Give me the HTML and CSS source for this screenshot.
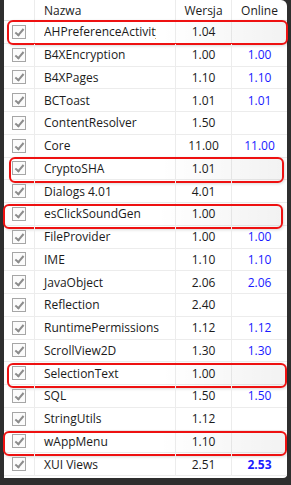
FILE: index.html
```html
<!DOCTYPE html>
<html lang="pl">
<head>
    <meta charset="UTF-8">
    <title>Biblioteki</title>
    <link rel="stylesheet" href="styles.css">
</head>
<body>
    <div class="panel">
        <div class="row head">
            <div class="cell chk"></div>
            <div class="cell name">Nazwa</div>
            <div class="cell ver">Wersja</div>
            <div class="cell online">Online</div>
        </div>

        <div class="row">
            <div class="cell chk"><span class="box"></span></div>
            <div class="cell name"><span class="label">AHPreferenceActivity</span></div>
            <div class="cell ver">1.04</div>
            <div class="cell online"></div>
            <div class="mark m1"></div>
        </div>
        <div class="row">
            <div class="cell chk"><span class="box"></span></div>
            <div class="cell name">B4XEncryption</div>
            <div class="cell ver">1.00</div>
            <div class="cell online">1.00</div>
        </div>
        <div class="row">
            <div class="cell chk"><span class="box"></span></div>
            <div class="cell name">B4XPages</div>
            <div class="cell ver">1.10</div>
            <div class="cell online">1.10</div>
        </div>
        <div class="row">
            <div class="cell chk"><span class="box"></span></div>
            <div class="cell name">BCToast</div>
            <div class="cell ver">1.01</div>
            <div class="cell online">1.01</div>
        </div>
        <div class="row">
            <div class="cell chk"><span class="box"></span></div>
            <div class="cell name">ContentResolver</div>
            <div class="cell ver">1.50</div>
            <div class="cell online"></div>
        </div>
        <div class="row">
            <div class="cell chk"><span class="box"></span></div>
            <div class="cell name">Core</div>
            <div class="cell ver">11.00</div>
            <div class="cell online">11.00</div>
        </div>
        <div class="row">
            <div class="cell chk"><span class="box"></span></div>
            <div class="cell name">CryptoSHA</div>
            <div class="cell ver">1.01</div>
            <div class="cell online"></div>
            <div class="mark m2"></div>
        </div>
        <div class="row">
            <div class="cell chk"><span class="box"></span></div>
            <div class="cell name">Dialogs 4.01</div>
            <div class="cell ver">4.01</div>
            <div class="cell online"></div>
        </div>
        <div class="row">
            <div class="cell chk"><span class="box"></span></div>
            <div class="cell name">esClickSoundGen</div>
            <div class="cell ver">1.00</div>
            <div class="cell online"></div>
            <div class="mark m3"></div>
        </div>
        <div class="row">
            <div class="cell chk"><span class="box"></span></div>
            <div class="cell name">FileProvider</div>
            <div class="cell ver">1.00</div>
            <div class="cell online">1.00</div>
        </div>
        <div class="row">
            <div class="cell chk"><span class="box"></span></div>
            <div class="cell name">IME</div>
            <div class="cell ver">1.10</div>
            <div class="cell online">1.10</div>
        </div>
        <div class="row">
            <div class="cell chk"><span class="box"></span></div>
            <div class="cell name">JavaObject</div>
            <div class="cell ver">2.06</div>
            <div class="cell online">2.06</div>
        </div>
        <div class="row">
            <div class="cell chk"><span class="box"></span></div>
            <div class="cell name">Reflection</div>
            <div class="cell ver">2.40</div>
            <div class="cell online"></div>
        </div>
        <div class="row">
            <div class="cell chk"><span class="box"></span></div>
            <div class="cell name">RuntimePermissions</div>
            <div class="cell ver">1.12</div>
            <div class="cell online">1.12</div>
        </div>
        <div class="row">
            <div class="cell chk"><span class="box"></span></div>
            <div class="cell name">ScrollView2D</div>
            <div class="cell ver">1.30</div>
            <div class="cell online">1.30</div>
        </div>
        <div class="row">
            <div class="cell chk"><span class="box"></span></div>
            <div class="cell name">SelectionText</div>
            <div class="cell ver">1.00</div>
            <div class="cell online"></div>
            <div class="mark m4"></div>
        </div>
        <div class="row">
            <div class="cell chk"><span class="box"></span></div>
            <div class="cell name">SQL</div>
            <div class="cell ver">1.50</div>
            <div class="cell online">1.50</div>
        </div>
        <div class="row">
            <div class="cell chk"><span class="box"></span></div>
            <div class="cell name">StringUtils</div>
            <div class="cell ver">1.12</div>
            <div class="cell online"></div>
        </div>
        <div class="row">
            <div class="cell chk"><span class="box"></span></div>
            <div class="cell name">wAppMenu</div>
            <div class="cell ver">1.10</div>
            <div class="cell online"></div>
            <div class="mark m5"></div>
        </div>
        <div class="row">
            <div class="cell chk"><span class="box"></span></div>
            <div class="cell name">XUI Views</div>
            <div class="cell ver">2.51</div>
            <div class="cell online newer">2.53</div>
        </div>
    </div>
</body>
</html>
```

FILE: styles.css
```css
:root {
    --line: #ececec;
    --text: #1b1b1b;
    --blue: #1a1aff;
    --mark: #ee1111;
}
body {
    margin: 0;
    background-color: #2e2e2e;
    font-family: 'Open Sans', 'Noto Sans', sans-serif;
    font-size: 12px;
    color: var(--text);
}
.panel {
    width: 283px;
    height: 478px;
    margin-left: 4px;
    background-color: white;
    border-radius: 0 6px 4px 0;
}
.row {
    position: relative;
    display: grid;
    grid-template-columns: 31px 141px 56px 55px;
    height: 22.75px;
    border-bottom: 1px solid var(--line);
    box-sizing: border-box;
}
.row.head {
    height: 21px;
    border-bottom-color: #dcdcdc;
}
.cell {
    display: flex;
    align-items: center;
    border-right: 1px solid var(--line);
    white-space: nowrap;
    overflow: hidden;
}
.cell:nth-child(4) {
    border-right: none;
}
.name {
    padding-left: 9px;
}
.label {
    max-width: 112px;
    overflow: hidden;
}
.ver, .online {
    justify-content: center;
}
.online {
    color: var(--blue);
}
.head .online {
    color: var(--text);
}
.online.newer {
    font-weight: bold;
}
.chk {
    justify-content: center;
}
.box {
    position: relative;
    width: 12px;
    height: 12px;
    border: 1px solid #a6a6a6;
    background: #fbfbfb;
}
.box::after {
    content: "";
    position: absolute;
    left: 4px;
    top: 1px;
    width: 3px;
    height: 7px;
    border-right: 2px solid #8c8c8c;
    border-bottom: 2px solid #8c8c8c;
    transform: rotate(40deg);
}
.mark {
    position: absolute;
    top: -1px;
    height: 25px;
    border: 2px solid var(--mark);
    border-radius: 6px;
    box-sizing: border-box;
    background: linear-gradient(to right, rgba(0,0,0,0) 55%, rgba(0,0,0,0.05));
    box-shadow: 1px 1px 3px rgba(0,0,0,0.15);
}
.m1 { left: 3px; right: -1px; }
.m2 { left: 5px; right: 3px; top: -1px; height: 26px; }
.m3 { left: -1px; right: 4px; top: 1px; height: 25px; }
.m4 { left: 3px; right: 0; top: 1px; }
.m5 { left: -1px; right: 0; top: 0; }
```
